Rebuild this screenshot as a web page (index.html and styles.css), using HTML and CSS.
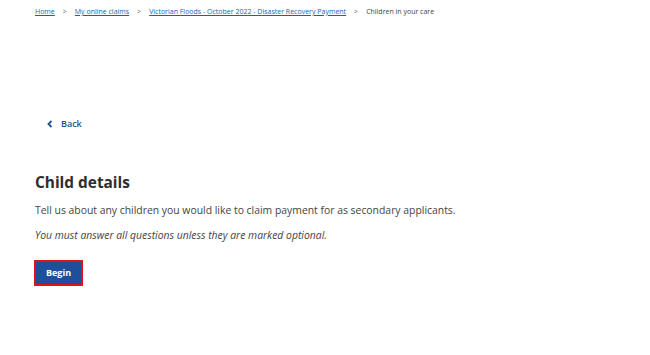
FILE: index.html
```html
<!DOCTYPE html>
<html lang="en">
<head>
    <meta charset="UTF-8">
    <meta name="viewport" content="width=device-width, initial-scale=1.0">
    <title>Child details</title>
    <link rel="stylesheet" href="styles.css">
</head>
<body>
    <nav class="breadcrumbs">
        <a href="#">Home</a>
        <span class="sep">&gt;</span>
        <a href="#">My online claims</a>
        <span class="sep">&gt;</span>
        <a href="#">Victorian Floods - October 2022 - Disaster Recovery Payment</a>
        <span class="sep">&gt;</span>
        <span class="current">Children in your care</span>
    </nav>

    <main class="content">
        <a class="back" href="#">
            <svg width="6" height="8" viewBox="0 0 6 8"><path d="M4.5 1 L1.5 4 L4.5 7" fill="none" stroke="#1d4f91" stroke-width="1.8"/></svg>
            Back
        </a>

        <h1>Child details</h1>
        <p>Tell us about any children you would like to claim payment for as secondary applicants.</p>
        <p class="hint">You must answer all questions unless they are marked optional.</p>

        <button class="btn">Begin</button>
    </main>
</body>
</html>
```

FILE: styles.css
```css
body {
    margin: 0;
    font-family: "Open Sans", "Noto Sans", sans-serif;
    color: #333;
    background: #fff;
}
.breadcrumbs {
    display: flex;
    align-items: center;
    gap: 7px;
    padding: 6px 0 0 35px;
    font-size: 7px;
    line-height: 12px;
}
.breadcrumbs a {
    color: #1d5fb8;
}
.breadcrumbs .sep {
    color: #666;
    padding: 0 1px;
}
.breadcrumbs .current {
    color: #444;
}
.content {
    padding: 0 35px;
}
.back {
    display: inline-flex;
    align-items: center;
    gap: 8px;
    margin: 99px 0 0 12px;
    color: #1d4f91;
    font-size: 9px;
    font-weight: 600;
    text-decoration: none;
}
h1 {
    margin: 39px 0 0;
    font-size: 15.4px;
    line-height: 22px;
    font-weight: 700;
    color: #2e2e2e;
}
p {
    margin: 8px 0 0;
    font-size: 10.4px;
    line-height: 16px;
    color: #444;
}
p.hint {
    margin-top: 9px;
    font-style: italic;
}
.btn {
    display: block;
    margin: 17px 0 0 -1px;
    width: 49px;
    height: 26px;
    background: #1f4f9a;
    color: #fff;
    border: 2px solid #e0101c;
    font-family: inherit;
    font-size: 9px;
    font-weight: 700;
    padding: 0;
}
```
